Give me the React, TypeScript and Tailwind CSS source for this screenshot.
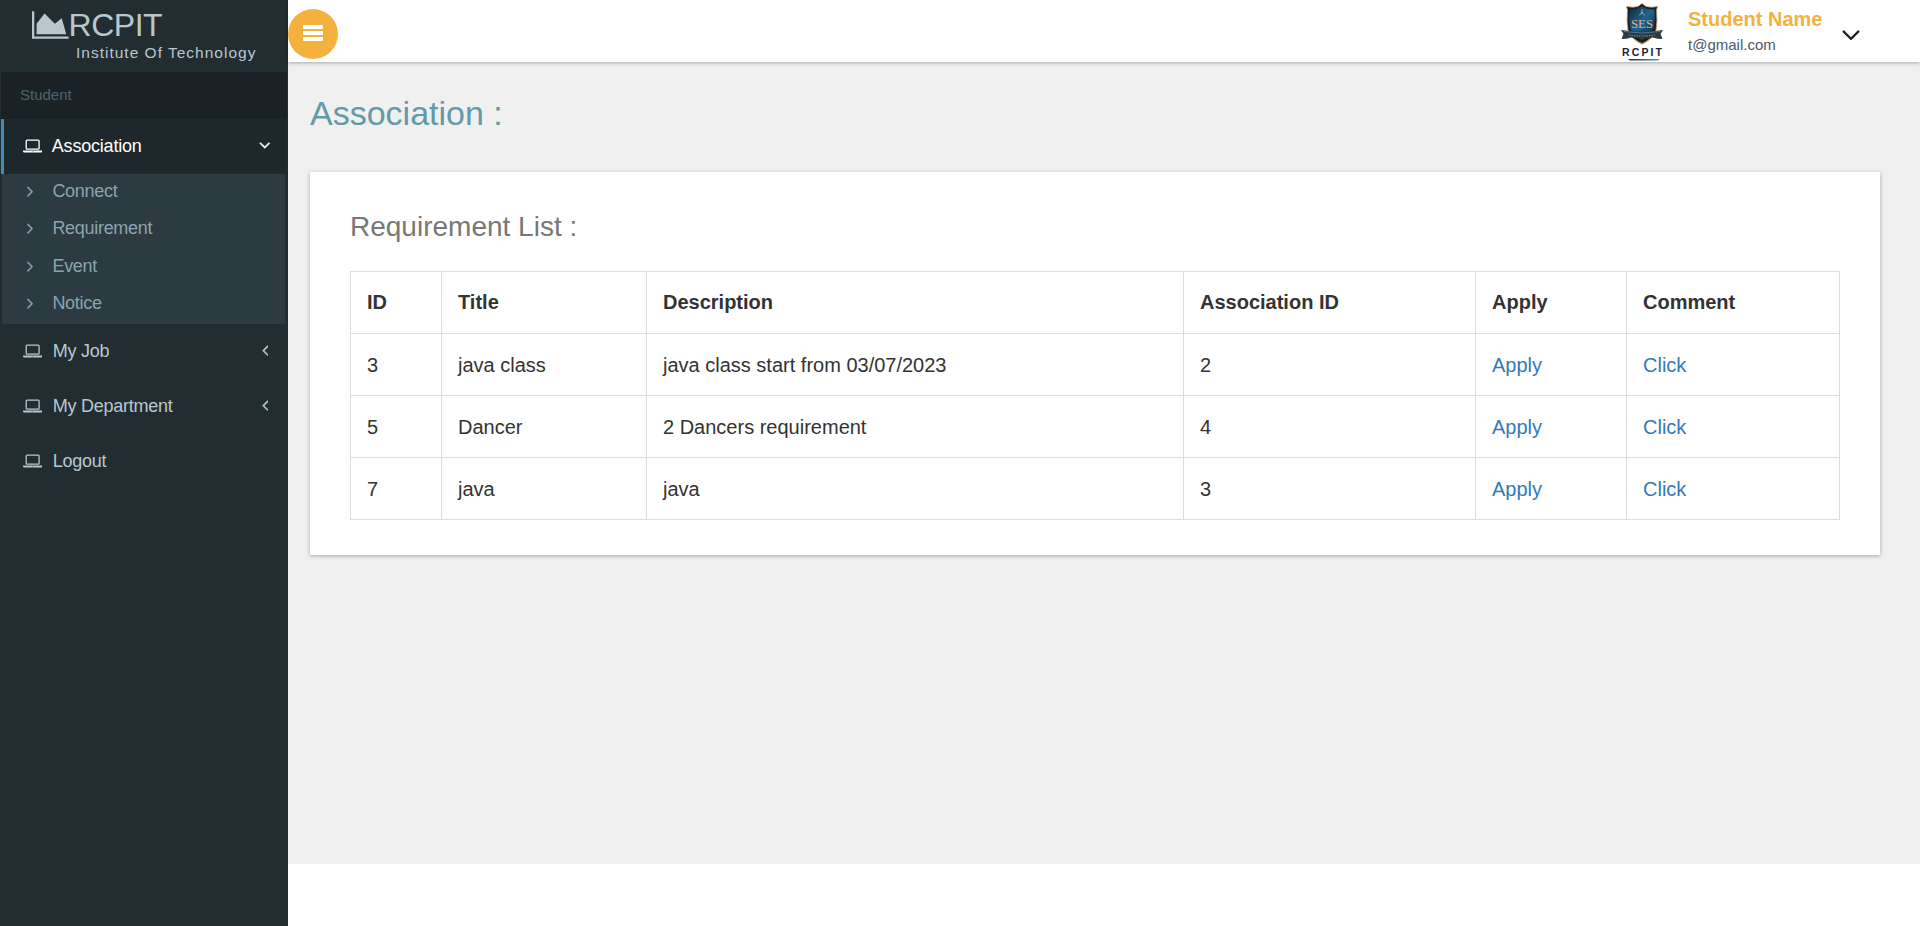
import React from "react";

type IconProps = { className: string };

const AreaChart = ({ className }: IconProps) => (
  <svg viewBox="0 0 2048 1792" fill="currentColor" className={className}>
    <path d="M2048 1536v128h-2048v-1536h128v1408h1920zM1664 512l256 896h-1664v-576l448-576 576 576z" />
  </svg>
);

const Laptop = ({ className }: IconProps) => (
  <svg viewBox="0 0 1920 1792" fill="currentColor" className={className}>
    <path d="M416 1280q-66 0-113-47t-47-113v-704q0-66 47-113t113-47h1088q66 0 113 47t47 113v704q0 66-47 113t-113 47h-1088zM384 416v704q0 13 9.5 22.5t22.5 9.5h1088q13 0 22.5-9.5t9.5-22.5v-704q0-13-9.5-22.5t-22.5-9.5h-1088q-13 0-22.5 9.5t-9.5 22.5zM1760 1344h160v96q0 40-47 68t-113 28h-1600q-66 0-113-28t-47-68v-96h1760zM1040 1440q16 0 16-16t-16-16h-160q-16 0-16 16t16 16h160z" />
  </svg>
);

const AngleDown = ({ className }: IconProps) => (
  <svg viewBox="0 0 1152 1792" fill="currentColor" stroke="currentColor" strokeWidth="45" className={className}>
    <path d="M1075 736q0 13-10 23l-466 466q-10 10-23 10t-23-10l-466-466q-10-10-10-23t10-23l50-50q10-10 23-10t23 10l393 393 393-393q10-10 23-10t23 10l50 50q10 10 10 23z" />
  </svg>
);

const AngleLeft = ({ className }: IconProps) => (
  <svg viewBox="0 0 640 1792" fill="currentColor" stroke="currentColor" strokeWidth="45" className={className}>
    <path d="M627 544q0 13-10 23l-393 393 393 393q10 10 10 23t-10 23l-50 50q-10 10-23 10t-23-10l-466-466q-10-10-10-23t10-23l466-466q10-10 23-10t23 10l50 50q10 10 10 23z" />
  </svg>
);

const AngleRight = ({ className }: IconProps) => (
  <svg viewBox="0 0 640 1792" fill="currentColor" stroke="currentColor" strokeWidth="30" className={className}>
    <path d="M595 960q0 13-10 23l-466 466q-10 10-23 10t-23-10l-50-50q-10-10-10-23t10-23l393-393-393-393q-10-10-10-23t10-23l50-50q10-10 23-10t23 10l466 466q10 10 10 23z" />
  </svg>
);

const Bars = ({ className }: IconProps) => (
  <svg viewBox="0 0 20 16" fill="currentColor" className={className}>
    <rect x="0" y="0" width="20" height="4" rx="0.8" />
    <rect x="0" y="6" width="20" height="4" rx="0.8" />
    <rect x="0" y="12" width="20" height="4" rx="0.8" />
  </svg>
);

const Crest = () => (
  <svg viewBox="0 0 46 60" className="h-[60px] w-[46px]">
    <defs>
      <linearGradient id="shield" x1="0" y1="0" x2="1" y2="1">
        <stop offset="0" stopColor="#10293c" />
        <stop offset="0.5" stopColor="#1f6590" />
        <stop offset="1" stopColor="#10202c" />
      </linearGradient>
      <linearGradient id="underline" x1="0" x2="1">
        <stop offset="0" stopColor="#1c2836" />
        <stop offset="0.5" stopColor="#4a5f74" />
        <stop offset="1" stopColor="#35a0d0" />
      </linearGradient>
    </defs>
    <path d="M23 2.500 L27 5.500 Q32 7 38.500 5.500 L37.500 9 Q38.500 20 37 29 Q34 38 23 43 Q12 38 9 29 Q7.500 20 8.500 9 L7.500 5.500 Q14 7 19 5.500Z" fill="#1b1d20" stroke="#b39264" strokeWidth="0.8" />
    <path d="M23 5.500 Q29 9 35.500 8.500 Q36.500 20 34.500 28 Q31 35 23 39 Q15 35 11.500 28 Q9.500 20 10.500 8.500 Q17 9 23 5.500Z" fill="url(#shield)" />
    <path d="M23 8v5M20.500 14.500l2.500-3.500 2.500 3.500" stroke="#8eaab8" strokeWidth="1" fill="none" />
    <text x="12" y="26.500" textLength="22" lengthAdjust="spacingAndGlyphs" className="font-['Liberation_Serif',serif] text-[13px]" fill="#d3bb94">SES</text>
    <path d="M2 29 Q23 32 44 29 L41.500 33 L43.500 38 Q38 38 34 36.500 Q23 38 12 36.500 Q8 38 2.500 38 L4.500 33Z" fill="#2b3944" />
    <path d="M5 30.500 Q23 33.500 41 30.500" stroke="#4d7892" strokeWidth="1" fill="none" />
    <path d="M10 34 Q23 36 36 34" stroke="#8a7863" strokeWidth="1.200" strokeDasharray="1.500 1" fill="none" />
    <path d="M16 38.500 Q20 41.500 23 42.500 Q26 41.500 30 38.500" stroke="#b58b43" strokeWidth="1" fill="none" />
    <text x="3" y="55" textLength="40" className="font-['Liberation_Sans',sans-serif] text-[10.500px] font-bold" fill="#20242c">RCPIT</text>
    <path d="M9 58h32l-2 1.500h-28z" fill="url(#underline)" />
  </svg>
);

const subItems = ["Connect", "Requirement", "Event", "Notice"];
const items = [
  { label: "My Job", expandable: true },
  { label: "My Department", expandable: true },
  { label: "Logout", expandable: false },
];

const rows = [
  { id: 3, title: "java class", description: "java class start from 03/07/2023", association: 2 },
  { id: 5, title: "Dancer", description: "2 Dancers requirement", association: 4 },
  { id: 7, title: "java", description: "java", association: 3 },
];

const Sidebar = () => (
  <aside className="flex w-72 shrink-0 flex-col bg-[#222d32] text-[#b8c7ce]">
    <div className="h-[72px] pl-8 pt-[9px]">
      <div className="flex h-8 items-center">
        <AreaChart className="h-8 w-[36.570px]" />
        <span className="text-[32px] leading-8 tracking-[-0.500px]">RCPIT</span>
      </div>
      <div className="pl-[44px] text-[15.500px] leading-6 tracking-[1px]">Institute Of Technology</div>
    </div>
    <div className="mx-px flex h-[47px] items-center bg-[#1a2226] pl-[19px] text-[15px] text-[#4b646f]">Student</div>
    <nav className="text-[18px] tracking-[-0.300px]">
      <div className="mx-px flex h-[55px] items-center border-l-[3px] border-[#3c8dbc] bg-[#1e282c] pl-[19px] pr-4 text-white">
        <Laptop className="mb-0.5 h-[18px] w-[19.300px]" />
        <span className="ml-[9.500px] mb-px tracking-[-0.200px]">Association</span>
        <AngleDown className="mb-[3px] ml-auto h-[18px] w-[11.570px]" />
      </div>
      <ul className="ml-0.5 mr-[3px] h-[150px] bg-[#2c3b41] text-[#8aa4af]">
        {subItems.map((item) => (
          <li key={item} className="flex h-[37.330px] items-center pl-[25px]">
            <AngleRight className="mb-[3px] h-[18px] w-[6.430px]" />
            <span className="mb-[2px] ml-[19px]">{item}</span>
          </li>
        ))}
      </ul>
      {items.map(({ label, expandable }) => (
        <div key={label} className="flex h-[55px] items-center pl-[23px] pr-5">
          <Laptop className="mb-0.5 h-[18px] w-[19.300px]" />
          <span className="mb-px ml-[10.500px] tracking-[-0.250px]">{label}</span>
          {expandable && <AngleLeft className="mb-[3px] ml-auto h-[18px] w-[6.430px]" />}
        </div>
      ))}
    </nav>
  </aside>
);

const Header = () => (
  <header className="relative flex h-[62px] items-center bg-white shadow-[0_1px_4px_rgba(0,0,0,0.3)]">
    <button className="mt-[6px] flex size-[50px] items-center justify-center rounded-full bg-[#f4b13e] text-white">
      <Bars className="mb-0.5 h-4 w-5" />
    </button>
    <div className="ml-auto flex items-start pr-[60px]">
      <Crest />
      <div className="ml-[23px] mt-[5px] w-[154px]">
        <div className="text-[20px] font-bold leading-[26px] text-[#f4b13e]">Student Name</div>
        <div className="text-[15px] leading-[26px] text-[#4c5870]">t@gmail.com</div>
      </div>
      <svg viewBox="0 0 18 10" fill="none" stroke="#222" strokeWidth="2.200" className="mt-[28.500px] h-2.5 w-[18px]">
        <path d="M1 0.900l8 8 8-8" />
      </svg>
    </div>
  </header>
);

const cell = "border-b border-r border-[#ddd] px-4";
const headCell = "border-b border-r border-[#ddd] px-4 pb-0.5";

export default function App() {
  return (
    <div className="flex h-[926px] bg-white font-['Liberation_Sans',Arial,sans-serif]">
      <Sidebar />
      <div className="flex min-w-0 flex-1 flex-col">
        <Header />
        <main className="h-[802px] bg-[#f0f0f0] pl-[22px] pr-10 pt-[31px]">
          <h1 className="h-[79px] text-[34px] leading-[40px] text-[#629aa9]">Association :</h1>
          <section className="h-[383px] bg-white px-10 pt-[38px] shadow-[0_1px_4px_rgba(0,0,0,0.3)]">
            <h2 className="h-[61px] text-[28px] leading-[33px] text-[#777]">Requirement List :</h2>
            <table className="w-full table-fixed border-separate border-spacing-0 border-l border-t border-[#ddd] text-left text-[20px] text-[#333]">
              <colgroup>
                <col className="w-[91px]" />
                <col className="w-[205px]" />
                <col className="w-[537px]" />
                <col className="w-[292px]" />
                <col className="w-[151px]" />
                <col />
              </colgroup>
              <thead>
                <tr className="h-[62px]">
                  <th className={headCell}>ID</th>
                  <th className={headCell}>Title</th>
                  <th className={headCell}>Description</th>
                  <th className={headCell}>Association ID</th>
                  <th className={headCell}>Apply</th>
                  <th className={headCell}>Comment</th>
                </tr>
              </thead>
              <tbody>
                {rows.map((row) => (
                  <tr key={row.id} className="h-[62px]">
                    <td className={cell}>{row.id}</td>
                    <td className={cell}>{row.title}</td>
                    <td className={cell}>{row.description}</td>
                    <td className={cell}>{row.association}</td>
                    <td className={cell}><a href="#" className="text-[#337ab7]">Apply</a></td>
                    <td className={cell}><a href="#" className="text-[#337ab7]">Click</a></td>
                  </tr>
                ))}
              </tbody>
            </table>
          </section>
        </main>
      </div>
    </div>
  );
}
